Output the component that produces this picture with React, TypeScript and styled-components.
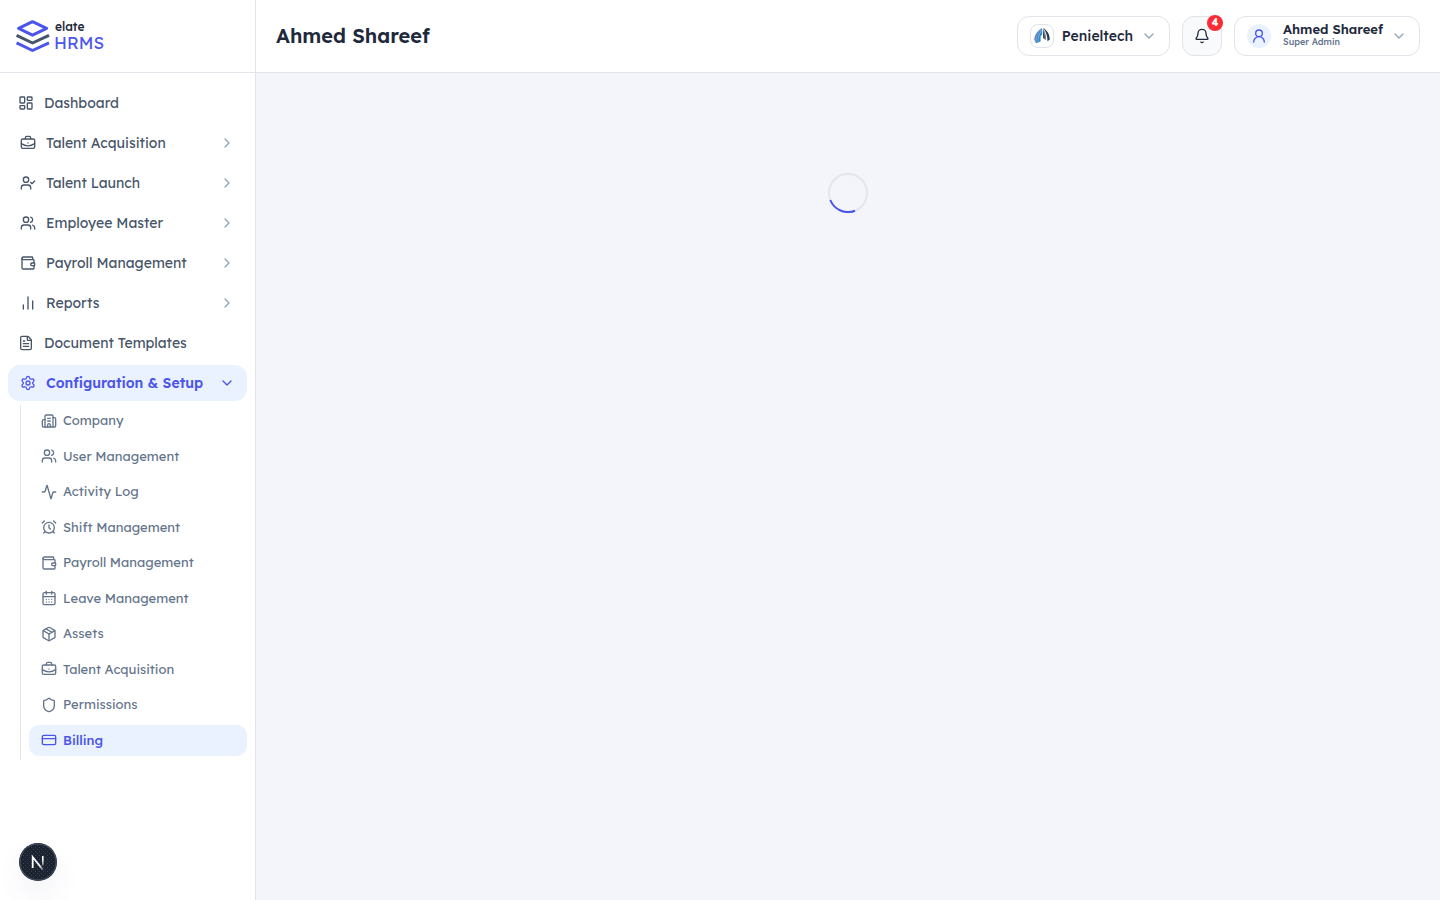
import React from "react";
import styled, { createGlobalStyle, css } from "styled-components";
import {
  LayoutDashboard,
  BriefcaseBusiness,
  UserCheck,
  Users,
  Wallet,
  ChartNoAxesColumn,
  FileText,
  Settings,
  Building2,
  Activity,
  AlarmClock,
  CalendarDays,
  Package,
  Shield,
  CreditCard,
  ChevronRight,
  ChevronDown,
  Bell,
  UserRound,
  type LucideIcon,
} from "lucide-react";

const color = {
  brand: "#4b55ec",
  tint: "#eaf2ff",
  ink: "#1e293b",
  nav: "#475569",
  muted: "#64748b",
  faint: "#94a3b8",
  line: "#e2e4ea",
  canvas: "#f3f5fa",
  alert: "#fb2c36",
};

const GlobalStyle = createGlobalStyle`
  *, *::before, *::after { box-sizing: border-box; }
  body {
    margin: 0;
    font-family: Lexend, Inter, "Open Sans", sans-serif;
    color: ${color.ink};
    background: ${color.canvas};
  }
  button { font: inherit; color: inherit; cursor: pointer; }
  a { color: inherit; text-decoration: none; }
  ul { list-style: none; margin: 0; padding: 0; }
  svg { flex-shrink: 0; }
`;

const Shell = styled.div`
  display: grid;
  grid-template-columns: 256px minmax(0, 1fr);
  min-height: 100vh;
`;

const Sidebar = styled.aside`
  display: flex;
  flex-direction: column;
  background: #fff;
  border-right: 1px solid ${color.line};
`;

const Brand = styled.a`
  display: flex;
  align-items: center;
  gap: 4px;
  height: 73px;
  padding: 0 16px;
  border-bottom: 1px solid ${color.line};
`;

const Wordmark = styled.span`
  display: flex;
  flex-direction: column;
`;

const WordTop = styled.span`
  padding-left: 1px;
  font-size: 12px;
  line-height: 14px;
  font-weight: 500;
`;

const WordBottom = styled.span`
  font-size: 17px;
  line-height: 18px;
  font-weight: 400;
  color: ${color.brand};
`;

const Nav = styled.nav`
  flex: 1;
  padding: 12px 8px;
`;

const NavList = styled.ul`
  display: flex;
  flex-direction: column;
  gap: 4px;
`;

const navRow = css`
  display: flex;
  align-items: center;
  gap: 10px;
  width: 100%;
  height: 36px;
  border: 0;
  border-radius: 12px;
  background: none;
  font-size: 14px;
  line-height: 20px;
  color: ${color.nav};
`;

const NavLink = styled.a`
  ${navRow}
  padding: 0 10px;
`;

const NavGroup = styled.button<{ $open?: boolean }>`
  ${navRow}
  padding: 0 12px;
  text-align: left;
  ${(p) =>
    p.$open &&
    css`
      background: ${color.tint};
      color: ${color.brand};
      font-weight: 600;
    `}
`;

const NavLabel = styled.span`
  flex: 1;
  white-space: nowrap;
`;

const SubList = styled.ul`
  margin: 4px 0 0 12px;
  padding-left: 8px;
  border-left: 1px solid ${color.line};
`;

const SubItem = styled.li`
  padding-bottom: 4px;
`;

const SubLink = styled.a<{ $active?: boolean }>`
  display: flex;
  align-items: center;
  gap: 6px;
  padding: 6px 12px;
  border-radius: 10px;
  font-size: 13px;
  line-height: 1.5;
  font-weight: ${(p) => (p.$active ? 500 : 400)};
  color: ${(p) => (p.$active ? color.brand : color.muted)};
  background: ${(p) => (p.$active ? color.tint : "transparent")};
`;

const Content = styled.div`
  display: flex;
  flex-direction: column;
`;

const Header = styled.header`
  display: flex;
  align-items: center;
  justify-content: space-between;
  height: 73px;
  padding: 0 20px;
  background: #fff;
  border-bottom: 1px solid ${color.line};
`;

const Title = styled.h1`
  margin: 0;
  font-size: 20px;
  line-height: 28px;
  font-weight: 600;
`;

const Tools = styled.div`
  display: flex;
  gap: 12px;
`;

const Picker = styled.button`
  display: flex;
  align-items: center;
  height: 40px;
  padding: 0 12px;
  gap: 8px;
  border: 1px solid ${color.line};
  border-radius: 12px;
  background: #fff;
  font-size: 14px;
  font-weight: 500;
`;

const CompanyBadge = styled.span`
  display: grid;
  place-items: center;
  width: 24px;
  height: 24px;
  border: 1px solid ${color.line};
  border-radius: 8px;
`;

const Avatar = styled.span`
  display: grid;
  place-items: center;
  width: 24px;
  height: 24px;
  margin-right: 4px;
  border-radius: 50%;
  background: ${color.tint};
  color: ${color.brand};
`;

const Person = styled.span`
  display: flex;
  flex-direction: column;
  padding-bottom: 2px;
  text-align: left;
`;

const PersonName = styled.span`
  font-size: 13px;
  line-height: 14px;
  font-weight: 600;
`;

const PersonRole = styled.span`
  font-size: 9px;
  line-height: 12px;
  font-weight: 500;
  color: ${color.muted};
`;

const BellButton = styled.button`
  position: relative;
  display: grid;
  place-items: center;
  width: 40px;
  height: 40px;
  padding: 0;
  border: 1px solid ${color.line};
  border-radius: 12px;
  background: #f8fafc;
`;

const Count = styled.span`
  position: absolute;
  top: -2px;
  right: -2px;
  width: 16px;
  height: 16px;
  border-radius: 50%;
  background: ${color.alert};
  color: #fff;
  font-size: 10px;
  line-height: 16px;
  font-weight: 700;
  text-align: center;
`;

const Main = styled.main`
  display: flex;
  justify-content: center;
  padding-top: 100px;
`;

const DevButton = styled.button`
  position: fixed;
  left: 19px;
  bottom: 19px;
  width: 38px;
  height: 38px;
  padding: 0;
  border: 0;
  border-radius: 50%;
  background: none;
  box-shadow: 0 16px 32px -8px rgba(71, 85, 140, 0.2);
`;

type Entry = { label: string; icon: LucideIcon; link?: boolean };

const entries: Entry[] = [
  { label: "Dashboard", icon: LayoutDashboard, link: true },
  { label: "Talent Acquisition", icon: BriefcaseBusiness },
  { label: "Talent Launch", icon: UserCheck },
  { label: "Employee Master", icon: Users },
  { label: "Payroll Management", icon: Wallet },
  { label: "Reports", icon: ChartNoAxesColumn },
  { label: "Document Templates", icon: FileText, link: true },
];

const setupEntries: Entry[] = [
  { label: "Company", icon: Building2 },
  { label: "User Management", icon: Users },
  { label: "Activity Log", icon: Activity },
  { label: "Shift Management", icon: AlarmClock },
  { label: "Payroll Management", icon: Wallet },
  { label: "Leave Management", icon: CalendarDays },
  { label: "Assets", icon: Package },
  { label: "Talent Acquisition", icon: BriefcaseBusiness },
  { label: "Permissions", icon: Shield },
  { label: "Billing", icon: CreditCard },
];

const LayersLogo = () => (
  <svg width="34" height="34" viewBox="0 0 34 34" fill="none" strokeWidth="3" strokeLinejoin="round" aria-hidden="true">
    <path d="M16.500 2.700 30.600 9.400 16.500 16.200 2.600 9.400Z" stroke={color.brand} />
    <path d="M.6 16.300 16.500 24 33 16.300" stroke="#475569" />
    <path d="M.6 23.800 16.500 31.500 33 23.800" stroke={color.brand} />
  </svg>
);

const SailMark = () => (
  <svg width="18" height="18" viewBox="0 0 18 18" aria-hidden="true">
    <path d="M9.200 1C5 3 1.400 7.500 1.200 12.500l1.600 3.600C3 11 5 6 9.200 1Z" fill="#6f86d0" />
    <path d="M9.200 1.200C5 5.500 2.800 10.500 3 16.300l4.600-1.800V9.500l1.600-2Z" fill="#2f86c6" />
    <path d="M8.800 3C6 7 4.900 11 5 15.600" stroke="#8fc4e8" strokeWidth=".7" fill="none" />
    <path d="M10.200 1c3.800 2 6.500 6.200 6.600 11.600l-2.300 1.600C14.400 9 13.400 5 10.200 1Z" fill="#28394f" />
    <path d="M10 1.800c2.200 3.400 3.200 7 3 11.200l-3-2Z" fill="#3b4a60" />
    <path d="M10.700 3.500c1.200 3 1.700 5.600 1.600 9" stroke="#c3cad6" strokeWidth=".6" fill="none" />
  </svg>
);

const Spinner = () => (
  <svg width="40" height="40" viewBox="0 0 40 40" fill="none" strokeWidth="2" role="img" aria-label="Loading">
    <circle cx="20" cy="20" r="19" stroke="#e2e5ec" />
    <path d="M2.300 27A19 19 0 0 0 27 37.700" stroke={color.brand} />
  </svg>
);

const DevMark = () => (
  <svg width="38" height="38" viewBox="0 0 38 38" fill="none" aria-hidden="true">
    <defs>
      <pattern id="grain" width="4" height="4" patternUnits="userSpaceOnUse">
        <rect width="1" height="1" fill="#3b4453" />
        <rect x="2" y="2" width="1" height="1" fill="#3b4453" />
      </pattern>
      <linearGradient id="fade" x1="0" y1="13" x2="0" y2="25" gradientUnits="userSpaceOnUse">
        <stop offset=".3" stopColor="#fff" />
        <stop offset="1" stopColor="#fff" stopOpacity=".1" />
      </linearGradient>
      <linearGradient id="slant" x1="14" y1="14" x2="25" y2="27" gradientUnits="userSpaceOnUse">
        <stop offset=".65" stopColor="#fff" />
        <stop offset="1" stopColor="#fff" stopOpacity=".1" />
      </linearGradient>
    </defs>
    <circle cx="19" cy="19" r="19" fill="#1b2230" />
    <circle cx="19" cy="19" r="17" fill="url(#grain)" />
    <circle cx="19" cy="19" r="18" stroke="#4b566b" />
    <path d="M13.700 25V14L24 27" stroke="url(#slant)" strokeWidth="1.800" />
    <path d="M23.800 13v9.500" stroke="url(#fade)" strokeWidth="1.600" />
  </svg>
);

export default function App() {
  return (
    <>
      <GlobalStyle />
      <Shell>
        <Sidebar>
          <Brand href="#home">
            <LayersLogo />
            <Wordmark>
              <WordTop>elate</WordTop>
              <WordBottom>HRMS</WordBottom>
            </Wordmark>
          </Brand>
          <Nav aria-label="Primary">
            <NavList>
              {entries.map(({ label, icon: Icon, link }) => (
                <li key={label}>
                  {link ? (
                    <NavLink href="#page">
                      <Icon size={16} />
                      <NavLabel>{label}</NavLabel>
                    </NavLink>
                  ) : (
                    <NavGroup type="button" aria-expanded={false}>
                      <Icon size={16} />
                      <NavLabel>{label}</NavLabel>
                      <ChevronRight size={16} color={color.faint} />
                    </NavGroup>
                  )}
                </li>
              ))}
              <li>
                <NavGroup type="button" aria-expanded $open>
                  <Settings size={16} />
                  <NavLabel>Configuration &amp; Setup</NavLabel>
                  <ChevronDown size={16} />
                </NavGroup>
                <SubList>
                  {setupEntries.map(({ label, icon: Icon }) => (
                    <SubItem key={label}>
                      <SubLink href="#setup" $active={label === "Billing"}>
                        <Icon size={16} />
                        {label}
                      </SubLink>
                    </SubItem>
                  ))}
                </SubList>
              </li>
            </NavList>
          </Nav>
        </Sidebar>
        <Content>
          <Header>
            <Title>Ahmed Shareef</Title>
            <Tools>
              <Picker type="button">
                <CompanyBadge>
                  <SailMark />
                </CompanyBadge>
                Penieltech
                <ChevronDown size={16} color={color.faint} />
              </Picker>
              <BellButton type="button" aria-label="Notifications">
                <Bell size={16} />
                <Count>4</Count>
              </BellButton>
              <Picker type="button">
                <Avatar>
                  <UserRound size={16} />
                </Avatar>
                <Person>
                  <PersonName>Ahmed Shareef</PersonName>
                  <PersonRole>Super Admin</PersonRole>
                </Person>
                <ChevronDown size={16} color={color.faint} />
              </Picker>
            </Tools>
          </Header>
          <Main>
            <Spinner />
          </Main>
        </Content>
      </Shell>
      <DevButton type="button" aria-label="Open developer tools">
        <DevMark />
      </DevButton>
    </>
  );
}
